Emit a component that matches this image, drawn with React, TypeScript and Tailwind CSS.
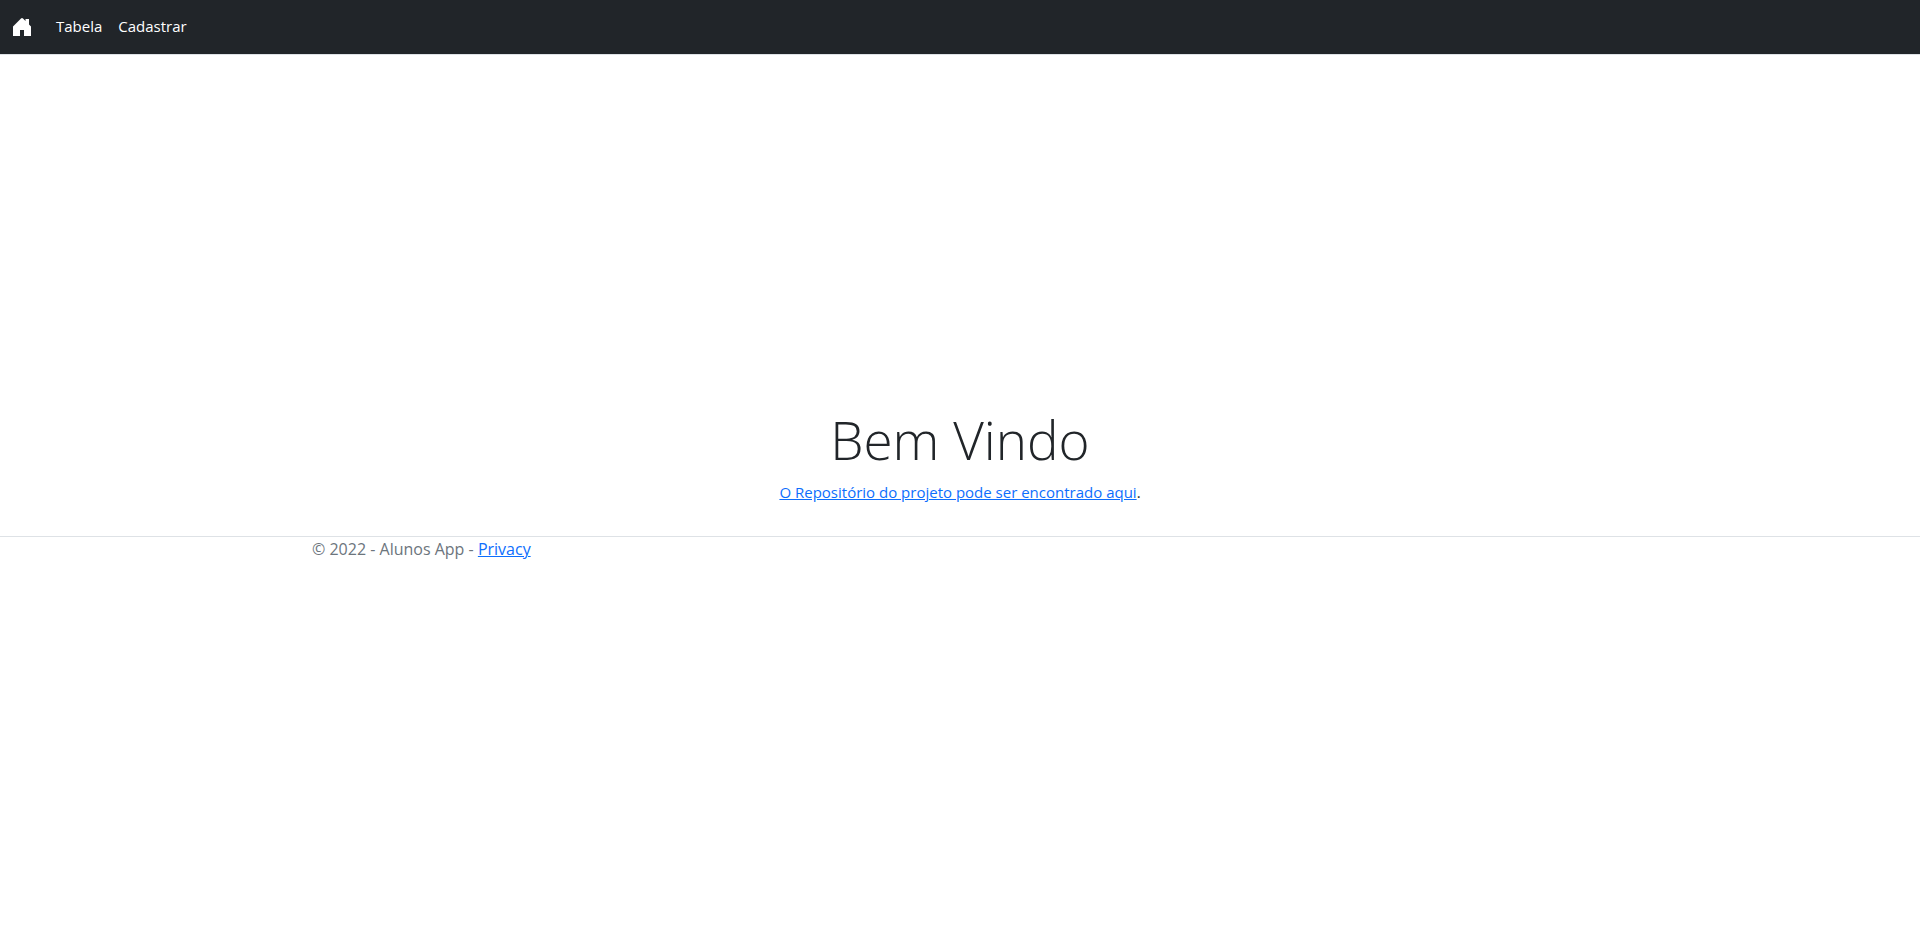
export default function App() {
  return (
    <div className="min-h-screen bg-white font-['Segoe_UI','Open_Sans',sans-serif] text-base leading-6 text-[#212529]">
      <header>
        <nav className="flex items-center border-b border-[#dee2e6] bg-[#212529] px-3 pt-1.5 pb-2">
          <a href="/" aria-label="Home" className="mr-4 text-white">
            <svg viewBox="0 0 20 20" className="size-5" fill="currentColor" aria-hidden="true">
              <path d="M1 20V10.5L9 2.5Q10 1.6 11 2.5L13.5 5V3H17V8.5L19 10.5V20H12V14H8V20Z" />
            </svg>
          </a>
          <ul className="flex text-[15px] text-white">
            <li><a href="/tabela" className="block p-2">Tabela</a></li>
            <li><a href="/cadastrar" className="block p-2">Cadastrar</a></li>
          </ul>
        </nav>
      </header>
      <main className="pt-[353px] pb-8 text-center">
        <h1 className="mb-2 text-[53px] leading-[64px] font-light">Bem Vindo</h1>
        <p className="text-[15px]">
          <a href="/projeto" className="text-[#0d6efd] underline">O Repositório do projeto pode ser encontrado aqui</a>.
        </p>
      </main>
      <footer className="border-t border-[#dee2e6] text-[#6c757d]">
        <div className="mx-auto max-w-[1320px] px-3">
          © 2022 - Alunos App - <a href="/privacy" className="text-[#0d6efd] underline">Privacy</a>
        </div>
      </footer>
    </div>
  );
}
